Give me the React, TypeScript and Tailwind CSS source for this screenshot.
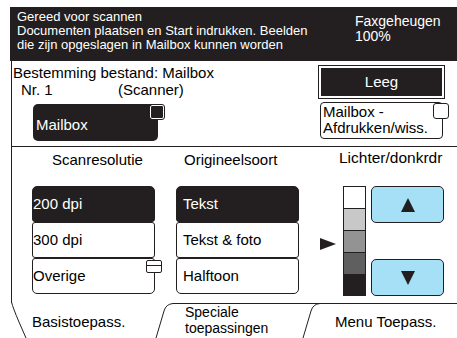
import React from "react";

const ink = "#231f20";

function Corner({ dark }: { dark?: boolean }) {
  return (
    <span
      className={
        dark
          ? "absolute right-[-6px] top-[1px] size-[14px] rounded-[2px] border border-white bg-[#231f20] outline outline-1 outline-[#231f20]"
          : "absolute right-[-7px] top-[0px] size-[16px] rounded-[3px] border border-[#231f20] bg-white"
      }
    />
  );
}

function OptionButton({
  label,
  active,
  first,
  last,
  inset,
  extra,
}: {
  label: string;
  active?: boolean;
  first?: boolean;
  last?: boolean;
  inset?: boolean;
  extra?: React.ReactNode;
}) {
  return (
    <div
      className={
        "relative flex h-[36px] w-[123px] items-center border border-[#231f20] text-[15px] " +
        (inset ? "pl-[6px] " : "pl-0 ") +
        (active ? "bg-[#231f20] text-white " : "bg-white text-black ") +
        (first ? "rounded-t-[5px] " : "rounded-t-[3px] ") +
        (last ? "rounded-b-[5px] " : "rounded-b-[3px] ")
      }
    >
      {label}
      {extra}
    </div>
  );
}

function Triangle({ dir }: { dir: "up" | "down" | "right" }) {
  const pts =
    dir === "up" ? "7,0 14,14 0,14" : dir === "down" ? "0,0 14,0 7,14" : "0,0 16,6 0,12";
  return (
    <svg width={dir === "right" ? 16 : 14} height={dir === "right" ? 12 : 14}>
      <polygon points={pts} fill={ink} />
    </svg>
  );
}

export default function App() {
  return (
    <div className="relative h-[338px] w-[457px] overflow-hidden bg-white pl-[10px] pt-[7px] font-['Liberation_Sans',Arial,sans-serif] text-black">
      {/* status header */}
      <header className="flex h-[54px] bg-[#231f20] text-[13px] leading-[14px] text-white">
        <div className="w-[338px] pl-[7px] pt-[3px]">
          <div>Gereed voor scannen</div>
          <div>Documenten plaatsen en Start indrukken. Beelden</div>
          <div>die zijn opgeslagen in Mailbox kunnen worden</div>
        </div>
        <div className="pl-[7px] pt-[7px] text-[14px] leading-[15px]">
          <div>Faxgeheugen</div>
          <div>100%</div>
        </div>
      </header>

      <div className="ml-[1px] border-l border-[#231f20]">
        {/* destination */}
        <section className="flex h-[86px] border-b border-[#231f20]">
          <div className="w-[306px] pl-[1px] pt-[3px] text-[15px] leading-[17px]">
            <div>Bestemming bestand: Mailbox</div>
            <div className="flex pl-[8px]">
              <span className="w-[97px]">Nr. 1</span>
              <span>(Scanner)</span>
            </div>
            <div className="relative ml-[20px] mt-[6px] flex h-[37px] w-[125px] items-center rounded-[5px] bg-[#231f20] pl-[3px] pt-[3px] text-white">
              Mailbox
              <Corner dark />
            </div>
          </div>
          <div className="flex flex-col pt-[4px]">
            <div className="flex h-[34px] w-[127px] items-center justify-center border border-[#231f20] p-[2px]">
              <div className="flex h-full w-full items-center justify-center bg-[#231f20] text-[15px] text-white">
                Leeg
              </div>
            </div>
            <div className="relative ml-[2px] mt-[3px] h-[37px] w-[123px] rounded-[4px] border border-[#231f20] pl-[2px] pt-[1px] text-[15px] leading-[16px]">
              <div>Mailbox -</div>
              <div>Afdrukken/wiss.</div>
              <Corner />
            </div>
          </div>
        </section>

        {/* settings */}
        <section className="flex h-[156px] text-[15px]">
          <div className="flex w-[164px] flex-col pl-[20px]">
            <div className="h-[39px] pl-[20px] pt-[2px]">Scanresolutie</div>
            <OptionButton label="200 dpi" active first />
            <OptionButton label="300 dpi" />
            <OptionButton
              label="Overige"
              last
              extra={
                <span className="absolute right-[-8px] top-[1px] flex h-[13px] w-[16px] flex-col rounded-[2px] border border-[#231f20] bg-white">
                  <span className="h-[5px] border-b border-[#231f20]" />
                </span>
              }
            />
          </div>
          <div className="flex w-[144px] flex-col">
            <div className="h-[39px] pl-[8px] pt-[2px]">Origineelsoort</div>
            <OptionButton label="Tekst" active first inset />
            <OptionButton label="Tekst & foto" inset />
            <OptionButton label="Halftoon" last inset />
          </div>
          <div className="flex flex-col">
            <div className="h-[39px] pl-[19px] pt-[2px] text-[15.5px] leading-[18px]">Lichter/donkrdr</div>
            <div className="flex">
              <div className="flex w-[23px] items-center pt-[6px]">
                <Triangle dir="right" />
              </div>
              <div className="flex h-[110px] w-[23px] flex-col border border-[#231f20]">
                <div className="h-[22px] border-b border-[#231f20] bg-white" />
                <div className="h-[22px] border-b border-[#231f20] bg-[#c8c8c8]" />
                <div className="h-[22px] border-b border-[#231f20] bg-[#939393]" />
                <div className="h-[21px] bg-[#5f5f5f]" />
                <div className="flex-1 bg-[#231f20]" />
              </div>
              <div className="ml-[5px] flex flex-col justify-between">
                <div className="flex h-[37px] w-[73px] items-center justify-center rounded-[5px] border border-[#231f20] bg-[#a6e0f6]">
                  <Triangle dir="up" />
                </div>
                <div className="flex h-[37px] w-[73px] items-center justify-center rounded-[5px] border border-[#231f20] bg-[#a6e0f6]">
                  <Triangle dir="down" />
                </div>
              </div>
            </div>
          </div>
        </section>
      </div>

      {/* tabs */}
      <nav className="absolute bottom-0 left-0 flex h-[36px] w-[457px] text-[15px] leading-[15px]">
        <svg className="absolute inset-0" width="457" height="36" fill="none" stroke={ink} strokeWidth="1">
          <path d="M11.5 -2 L11.5 0 Q13 6 19 20 L26 36" />
          <path d="M156 36 L164 9 Q166 2 173 1.5 L457 1.5" />
          <path d="M303 36 L311 9 Q313 2 320 1.5" />
        </svg>
        <div className="flex w-[160px] items-center pl-[32px] pt-[2px]">Basistoepass.</div>
        <div className="flex w-[150px] flex-col pl-[25px] pt-[2px] text-[14px] leading-[16px]">
          <span>Speciale</span>
          <span>toepassingen</span>
        </div>
        <div className="flex flex-1 items-center pl-[25px] pt-[2px]">Menu Toepass.</div>
      </nav>
    </div>
  );
}
